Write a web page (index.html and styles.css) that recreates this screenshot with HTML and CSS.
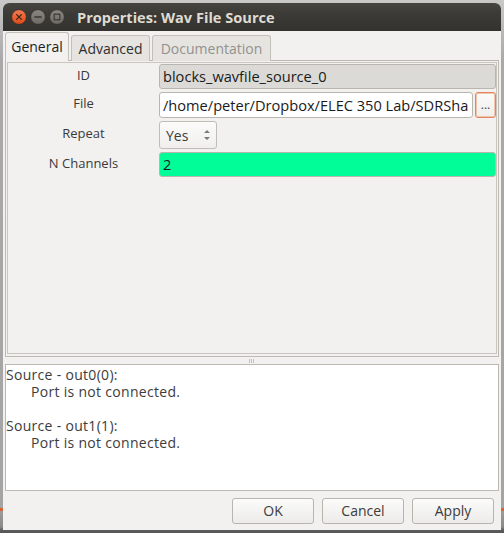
FILE: index.html
```html
<!DOCTYPE html>
<html>
<head>
<meta charset="utf-8">
<link rel="stylesheet" href="styles.css">
</head>
<body>
<div class="window">
  <div class="titlebar">
    <div class="controls">
      <svg class="wbtn" width="16" height="16" viewBox="0 0 16 16">
        <defs>
          <linearGradient id="gc" x1="0" y1="0" x2="0" y2="1">
            <stop offset="0" stop-color="#f47a4f"/>
            <stop offset="1" stop-color="#df4a17"/>
          </linearGradient>
          <linearGradient id="gg" x1="0" y1="0" x2="0" y2="1">
            <stop offset="0" stop-color="#8a8781"/>
            <stop offset="1" stop-color="#6d6a65"/>
          </linearGradient>
        </defs>
        <circle cx="8" cy="8" r="7.3" fill="url(#gc)" stroke="#2e2d2a" stroke-width="0.6"/>
        <path d="M5.6 5.6 L10.4 10.4 M10.4 5.6 L5.6 10.4" stroke="#3a2a22" stroke-width="1.3" stroke-linecap="round"/>
      </svg>
      <svg class="wbtn" width="16" height="16" viewBox="0 0 16 16">
        <circle cx="8" cy="8" r="7.3" fill="url(#gg)" stroke="#2e2d2a" stroke-width="0.6"/>
        <path d="M4.8 8 H11.2" stroke="#3a3935" stroke-width="1.3" stroke-linecap="round"/>
      </svg>
      <svg class="wbtn" width="16" height="16" viewBox="0 0 16 16">
        <circle cx="8" cy="8" r="7.3" fill="url(#gg)" stroke="#2e2d2a" stroke-width="0.6"/>
        <rect x="5.2" y="5.2" width="5.6" height="5.6" fill="none" stroke="#3a3935" stroke-width="1.2"/>
      </svg>
    </div>
    <div class="title">Properties: Wav File Source</div>
  </div>
  <div class="content">
    <div class="tabs">
      <div class="tab active t1">General</div>
      <div class="tab t2">Advanced</div>
      <div class="tab disabled t3">Documentation</div>
    </div>
    <div class="notebook">
      <div class="page">
        <div class="form">
          <div class="label">ID</div>
          <div class="field"><div class="entry readonly">blocks_wavfile_source_0</div></div>
          <div class="label">File</div>
          <div class="field file">
            <div class="entry">/home/peter/Dropbox/ELEC 350 Lab/SDRSha</div>
            <div class="browse">...</div>
          </div>
          <div class="label">Repeat</div>
          <div class="field"><div class="combo"><span>Yes</span>
            <svg width="8" height="14" viewBox="0 0 8 14"><path d="M1 5 L4 2 L7 5 Z M1 9 L4 12 L7 9 Z" fill="#7d7b77"/></svg></div></div>
          <div class="label">N Channels</div>
          <div class="field"><div class="entry green">2</div></div>
        </div>
      </div>
    </div>
    <div class="sep"><span class="grip"></span></div>
    <div class="log">
      <div class="line">Source - out0(0):</div>
      <div class="line ind">Port is not connected.</div>
      <div class="line">&nbsp;</div>
      <div class="line">Source - out1(1):</div>
      <div class="line ind">Port is not connected.</div>
    </div>
    <div class="buttons">
      <div class="btn">OK</div>
      <div class="btn">Cancel</div>
      <div class="btn">Apply</div>
    </div>
  </div>
</div>
</body>
</html>
```

FILE: styles.css
```css
html, body {
  margin: 0;
  padding: 0;
}
body {
  width: 504px;
  height: 533px;
  overflow: hidden;
  background: linear-gradient(to bottom, #c9c9c9 0, #a9a9a9 60px, #a4a4a4 508px, #d9632e 508px, #d9632e 511px, #9c9c9c 511px, #8a8a8a 527px, #5d5d5d 530px, #555 533px);
  font-family: "Open Sans", "DejaVu Sans", sans-serif;
  font-size: 14px;
  color: #3c3c3c;
}
.window {
  margin: 3px 0 0 3px;
  width: 498px;
  height: 527px;
  display: flex;
  flex-direction: column;
  background: #f2f1f0;
  border-radius: 6px 6px 0 0;
  overflow: hidden;
}
.titlebar {
  height: 28px;
  flex: none;
  display: flex;
  align-items: center;
  background: linear-gradient(to bottom, #46453f, #3b3a36 40%, #33322f);
}
.controls {
  display: flex;
  gap: 3px;
  padding-left: 8px;
}
.wbtn { display: block; }
.title {
  margin-left: 12px;
  font-weight: bold;
  font-size: 14.6px;
  color: #dfdbd2;
}
.content {
  flex: 1;
  display: flex;
  flex-direction: column;
  padding: 2px 2px 0 2px;
}
.tabs {
  display: flex;
  align-items: flex-end;
  gap: 2px;
  height: 28px;
  position: relative;
  z-index: 1;
  margin-bottom: -1px;
}
.tab {
  height: 25px;
  line-height: 25px;
  text-align: center;
  border: 1px solid #c3c0ba;
  border-bottom: none;
  border-radius: 3px 3px 0 0;
  background: #e6e4e1;
  color: #2e2e2e;
}
.t1 { width: 62px; }
.t2 { width: 77px; }
.t3 { width: 117px; }
.tab.active {
  height: 28px;
  line-height: 28px;
  background: #f2f1f0;
  color: #1e1e1e;
}
.tab.disabled {
  color: #93918d;
}
.notebook {
  height: 293px;
  border: 1px solid #bdbab4;
  padding: 1px;
}
.page {
  height: 289px;
  border: 1px solid #c9c6c0;
  padding-top: 1px;
}
.form {
  display: grid;
  grid-template-columns: 151px 337px;
  row-gap: 3px;
  align-items: center;
}
.label {
  text-align: center;
  font-size: 13px;
  line-height: 18px;
  padding-bottom: 4px;
  color: #3a3a3a;
}
.field {
  display: flex;
  gap: 2px;
}
.entry {
  flex: 1;
  height: 23px;
  line-height: 23px;
  border: 1px solid #b9b6b0;
  border-radius: 3px;
  background: #ffffff;
  padding: 0 3px;
  font-size: 14.6px;
  color: #1a1a1a;
  white-space: nowrap;
  overflow: hidden;
}
.entry.readonly {
  background: #dcdad6;
}
.file .entry {
  height: 24px;
  line-height: 24px;
}
.entry.green {
  background: #00fd98;
}
.browse {
  width: 19px;
  height: 24px;
  line-height: 24px;
  border: 1px solid #e2845c;
  border-radius: 3px;
  background: linear-gradient(#fbfbfa, #efeeec);
  text-align: center;
  font-size: 12px;
  color: #444;
  box-shadow: inset 0 0 0 1px #f3c4ad;
}
.combo {
  width: 45px;
  height: 26px;
  border: 1px solid #c0bdb7;
  border-radius: 3px;
  background: linear-gradient(#fbfbfa, #f0efed);
  display: flex;
  align-items: center;
  justify-content: space-between;
  padding: 0 5px 0 6px;
  color: #3c3c3c;
}
.combo svg { display: block; }
.sep {
  height: 7px;
  display: flex;
  justify-content: center;
  align-items: center;
}
.grip {
  width: 6px;
  height: 4px;
  background: linear-gradient(to right, #c4c1bb 0 1px, transparent 1px 2px, #c4c1bb 2px 3px, transparent 3px 4px, #c4c1bb 4px 5px, transparent 5px);
}
.log {
  height: 124px;
  border: 1px solid #bcb9b3;
  background: #ffffff;
  padding: 1px 1px 0 0;
  color: #3c3c3c;
}
.line {
  height: 17px;
  line-height: 17px;
  font-size: 14px;
  letter-spacing: 0.3px;
  white-space: nowrap;
}
.line.ind {
  padding-left: 25px;
}
.buttons {
  display: flex;
  justify-content: flex-end;
  gap: 8px;
  padding: 7px 5px 0 0;
}
.btn {
  width: 80px;
  height: 24px;
  line-height: 24px;
  text-align: center;
  border: 1px solid #b8b5af;
  border-radius: 3px;
  background: linear-gradient(#fbfbfa, #ecebe9);
  color: #3c3c3c;
}
```
